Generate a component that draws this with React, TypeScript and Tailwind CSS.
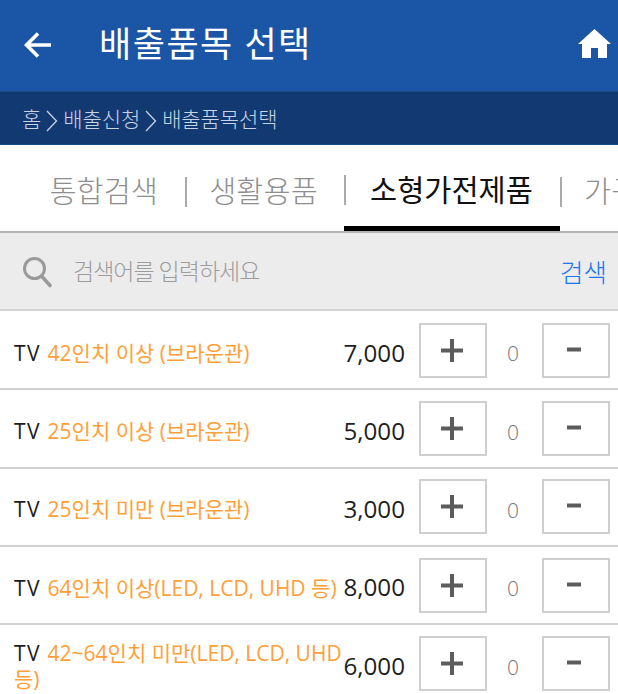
import React from 'react';

const font = { fontFamily: '"Open Sans", "Noto Sans CJK KR", sans-serif' };

interface Item {
  name: string;
  price: string;
}

const items: Item[] = [
  { name: '42인치 이상 (브라운관)', price: '7,000' },
  { name: '25인치 이상 (브라운관)', price: '5,000' },
  { name: '25인치 미만 (브라운관)', price: '3,000' },
  { name: '64인치 이상(LED, LCD, UHD 등)', price: '8,000' },
  { name: '42~64인치 미만(LED, LCD, UHD 등)', price: '6,000' },
];

const Chevron = () => (
  <svg className="mx-[5px] mt-[2px] shrink-0" width="12" height="22" viewBox="0 0 12 22" fill="none">
    <path d="M1 1l9.500 10L1 21" stroke="#c8d3e4" strokeWidth="1.300" />
  </svg>
);

const Row = ({ item }: { item: Item }) => (
  <div className="flex h-[78.3px] shrink-0 items-center border-b-2 border-[#d2d2d2] pl-[14px] pr-[9px]">
    <div className="w-[329px] shrink-0 pt-[5px] text-[21px] leading-[26px] text-[#ff9f38]">
      <span className="tracking-[1.500px] text-[#1c1c1c]">TV</span> <span className="ml-[1px]">{item.name}</span>
    </div>
    <div className="w-[62px] shrink-0 pt-[5px] text-right text-[24.200px] text-[#1e1e1e]">{item.price}</div>
    <button className="ml-[14px] flex h-[55px] w-[68px] shrink-0 items-center justify-center border-2 border-[#cfcfcf] bg-white pr-[3px]">
      <svg width="22" height="23" viewBox="0 0 22 23">
        <path d="M11 0v23M0 11.500h22" stroke="#5c5c5c" strokeWidth="4" />
      </svg>
    </button>
    <div className="w-[55px] shrink-0 pt-[8px] pr-[3px] text-center text-[21px] font-light text-[#777]">0</div>
    <button className="flex h-[55px] w-[68px] shrink-0 items-center justify-center border-2 border-[#cfcfcf] bg-white pr-[4px] pb-[2px]">
      <svg width="14" height="5" viewBox="0 0 14 5">
        <path d="M0 2.500h14" stroke="#5c5c5c" strokeWidth="4" />
      </svg>
    </button>
  </div>
);

export default function App() {
  return (
    <div className="h-[694px] w-[618px] overflow-hidden bg-white" style={font}>
      <header className="flex h-[91px] items-center bg-[#1b55a6] text-white">
        <svg className="ml-[24px] mb-[2px] shrink-0" width="28" height="28" viewBox="0 0 28 28" fill="none">
          <path d="M27 14H3M14 2.500 2.500 14 14 25.500" stroke="#fff" strokeWidth="3.600" />
        </svg>
        <h1 className="ml-[47px] mb-[4px] flex-1 text-[35px] leading-none font-normal tracking-[1.500px]">배출품목 선택</h1>
        <svg className="mr-[7px] mt-[-5px] shrink-0" width="33" height="29" viewBox="0 0 33 29">
          <path d="M16.500 0 33 15h-4v14H20V19h-7v10H4V15H0Z" fill="#fff" />
        </svg>
      </header>

      <nav className="flex h-[54px] items-center border-y border-[#1d4a86] bg-[#133973] pl-[22px] pt-[3px] text-[21px] font-light tracking-[-0.100px] text-[#c8d3e4]">
        <span>홈</span>
        <Chevron />
        <span>배출신청</span>
        <Chevron />
        <span>배출품목선택</span>
      </nav>

      <div className="flex h-[88px] items-stretch overflow-hidden border-b-2 border-[#b4b4b4] whitespace-nowrap text-[29.500px] leading-none font-light text-[#8e8e8e]">
        <div className="flex w-[185px] shrink-0 items-center justify-end pt-[6px] pr-[27px]">통합검색</div>
        <div className="mt-[32px] mb-[24px] w-[2px] shrink-0 bg-[#aaa]" />
        <div className="flex w-[157px] shrink-0 items-center justify-center pt-[6px] pr-[4px]">생활용품</div>
        <div className="flex w-[216px] shrink-0 items-center border-b-[5px] border-black pt-[8px]">
          <div className="h-[30px] w-[2px] shrink-0 bg-[#aaa]" />
          <span className="ml-[24px] font-normal text-[#111]">소형가전제품</span>
        </div>
        <div className="mt-[32px] mb-[24px] w-[2px] shrink-0 bg-[#aaa]" />
        <div className="flex items-center pt-[6px] pl-[22px]">가구</div>
      </div>

      <div className="flex h-[78px] items-center border-b-2 border-[#d2d2d2] bg-[#ececec] pl-[22px] pr-[11px]">
        <svg width="30" height="32" viewBox="0 0 30 32" fill="none" className="mt-[2px] shrink-0">
          <circle cx="12.500" cy="12.500" r="10" stroke="#9a9a9a" strokeWidth="3" />
          <path d="M19.500 20 28 29.500" stroke="#9a9a9a" strokeWidth="3.600" strokeLinecap="round" />
        </svg>
        <span className="ml-[21px] flex-1 text-[23px] font-light tracking-[-1px] text-[#9c9c9c]">검색어를 입력하세요</span>
        <span className="mt-[2px] text-[25.500px] font-light text-[#1877f2]">검색</span>
      </div>

      <div className="pt-[1px]">
        {items.map((item) => (
          <Row key={item.name} item={item} />
        ))}
      </div>
    </div>
  );
}
